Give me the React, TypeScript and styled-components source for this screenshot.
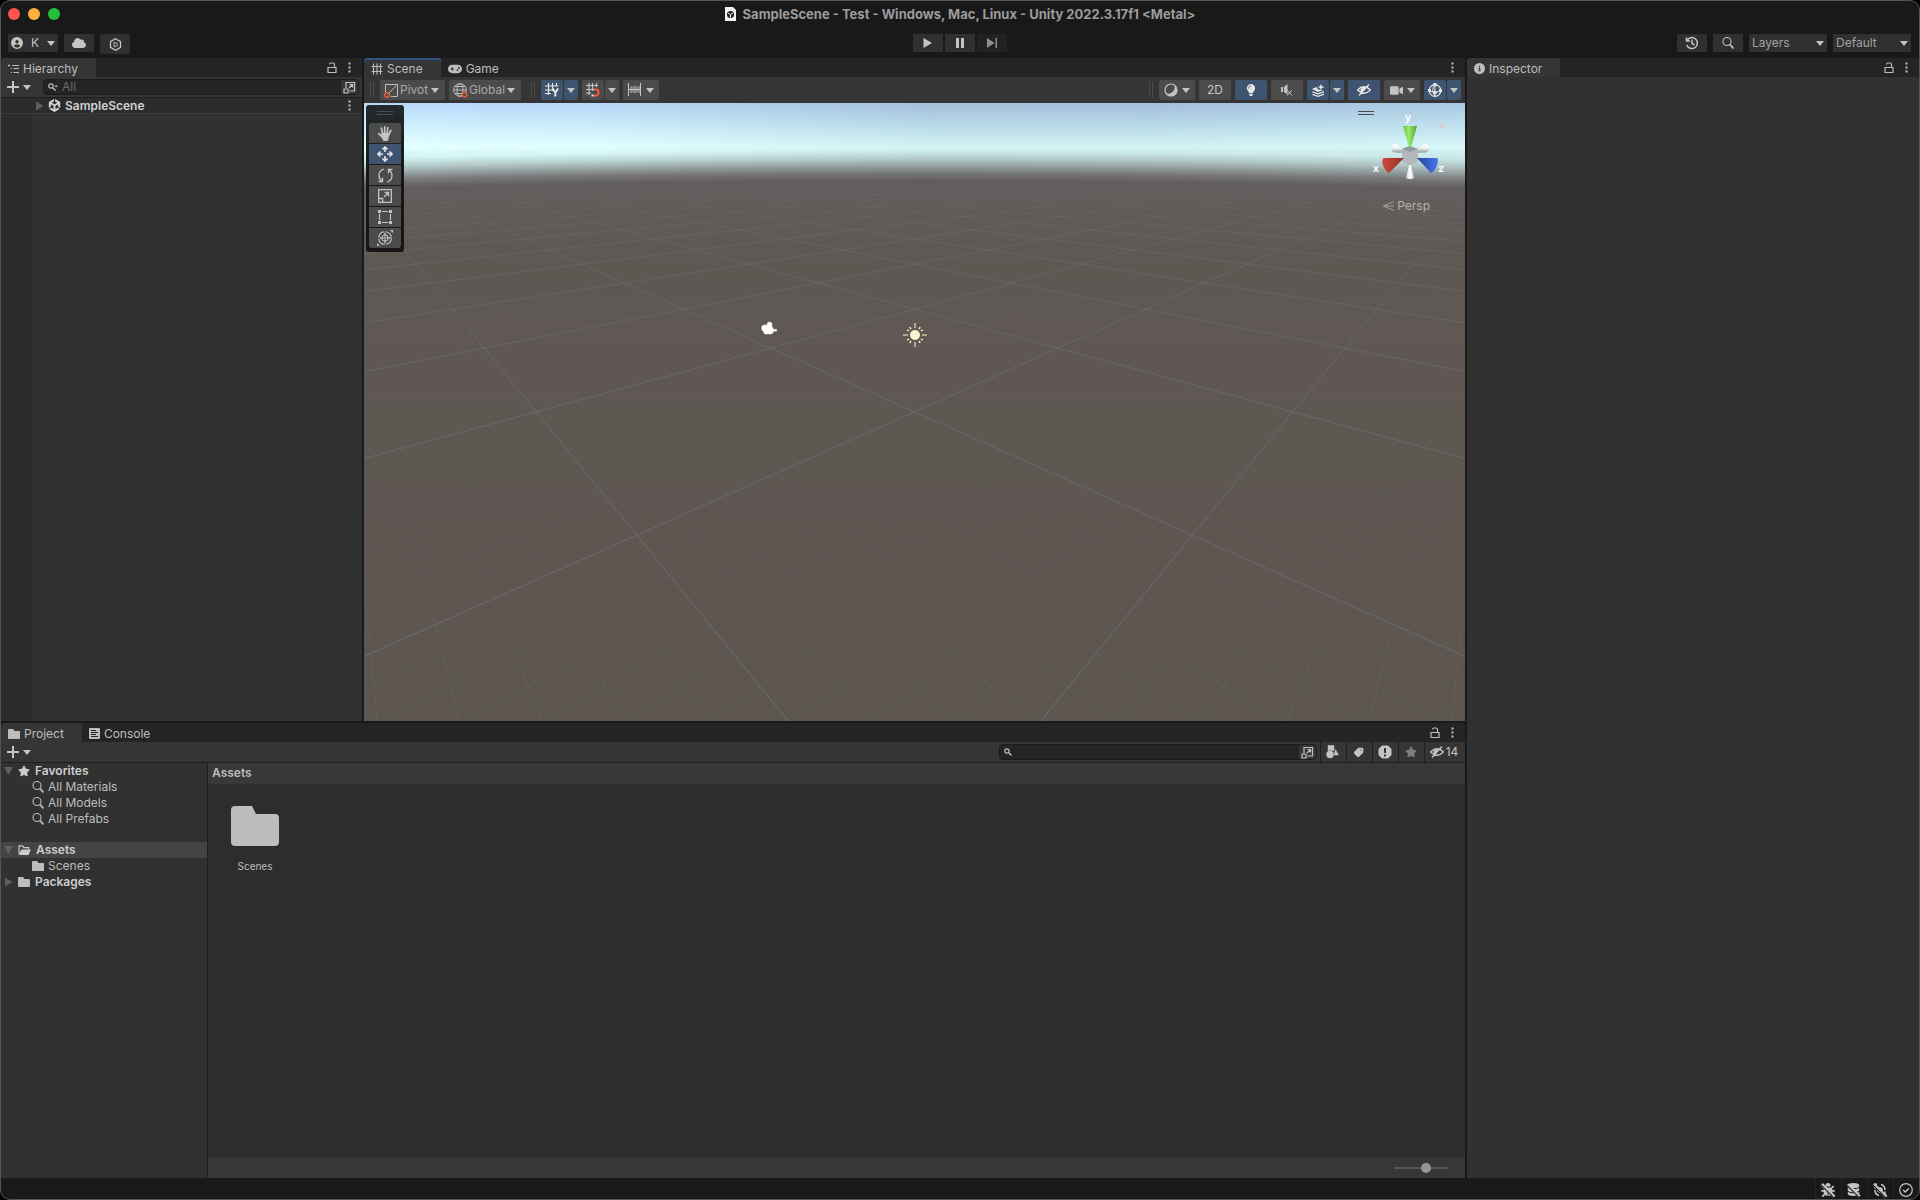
import React from "react";
import styled, { createGlobalStyle, css } from "styled-components";
import {
  FaUnity,
  FaCloud,
  FaCircleUser,
  FaStar,
  FaGamepad,
  FaVideo,
  FaLightbulb,
  FaBug,
  FaCircleInfo,
  FaTag,
  FaDatabase,
} from "react-icons/fa6";

const color = {
  chrome: "#191919",
  tabBar: "#242424",
  bar: "#353535",
  panel: "#313131",
  gutter: "#2c2c2c",
  field: "#242424",
  line: "#1f1f1f",
  button: "#303030",
  tool: "#4b4b4b",
  toolOn: "#3f5470",
  text: "#bdbdbd",
  icon: "#c4c4c4",
  dim: "#a2a2a2",
};

const GlobalStyle = createGlobalStyle`
  * { box-sizing: border-box; }
  body { margin: 0; background: #000; }
  body, button, input, select {
    font-family: Inter, "Liberation Sans", sans-serif;
    font-size: 12px;
    line-height: 16px;
    color: ${color.text};
  }
  button { display: flex; align-items: center; justify-content: center; border: 0; padding: 0; background: none; }
  svg { display: block; flex: none; }
  h1, h2, ul { margin: 0; padding: 0; font-size: 12px; list-style: none; }
`;

/* ---------- window ---------- */

const Window = styled.div`
  height: 100vh;
  display: flex;
  flex-direction: column;
  background: ${color.chrome};
  border: 1px solid #555;
  border-radius: 10px;
  overflow: hidden;
`;

const TitleBar = styled.header`
  display: grid;
  grid-template-columns: 1fr auto 1fr;
  align-items: center;
  height: 27px;
  padding: 0 7px 2px;
`;

const Lights = styled.div`
  display: flex;
  gap: 8px;
`;

const Light = styled.button<{ $fill: string }>`
  width: 12px;
  height: 12px;
  border-radius: 50%;
  background: ${(p) => p.$fill};
`;

const Title = styled.h1`
  display: flex;
  align-items: center;
  gap: 7px;
  font-size: 13px;
  font-weight: 700;
  color: #9b9b9b;
  white-space: nowrap;
`;

const AppBar = styled.div`
  display: grid;
  grid-template-columns: 1fr auto 1fr;
  align-items: start;
  height: 30px;
  padding: 6px 8px 0 7px;
`;

const Group = styled.div<{ $gap: number; $end?: boolean }>`
  display: flex;
  gap: ${(p) => p.$gap}px;
  justify-content: ${(p) => (p.$end ? "flex-end" : "flex-start")};
`;

const ChromeButton = styled.button<{ $wide?: boolean; $tall?: boolean; $faint?: boolean }>`
  width: ${(p) => (p.$wide ? 50 : 30)}px;
  height: ${(p) => (p.$tall ? 20 : 18)}px;
  gap: 8px;
  background: ${(p) => (p.$faint ? "#222" : color.button)};
  color: ${(p) => (p.$faint ? "#909090" : color.icon)};
  border-radius: ${(p) => (p.$tall ? 2 : 0)}px;
`;

const ChromeSelect = styled.label`
  position: relative;
  width: 78px;
  height: 18px;
  display: flex;
  align-items: center;
  background: ${color.button};
  select {
    appearance: none;
    width: 100%;
    border: 0;
    padding: 0 3px;
    background: transparent;
    color: ${color.dim};
  }
  svg { position: absolute; right: 3px; pointer-events: none; }
`;

/* ---------- docking ---------- */

const Dock = styled.main`
  flex: 1;
  min-height: 0;
  display: grid;
  grid-template-columns: minmax(0, 1464fr) minmax(0, 452fr);
  gap: 2px;
`;

const Stack = styled.div`
  display: grid;
  grid-template-rows: minmax(0, 663fr) minmax(0, 455fr);
  gap: 2px;
`;

const Upper = styled.div`
  display: grid;
  grid-template-columns: minmax(0, 361fr) minmax(0, 1101fr);
  gap: 2px;
`;

const Panel = styled.section`
  display: flex;
  flex-direction: column;
  min-width: 0;
  min-height: 0;
  background: ${color.panel};
  border-radius: 3px 3px 0 0;
  overflow: hidden;
`;

const TabBar = styled.div`
  display: flex;
  height: 19px;
  flex: none;
  background: ${color.tabBar};
`;

const Tab = styled.button<{ $active?: boolean; $accent?: boolean }>`
  gap: 4px;
  padding: 2px 18px 0 7px;
  border-radius: 3px 3px 0 0;
  background: ${(p) => (p.$active ? color.bar : "transparent")};
  box-shadow: ${(p) => (p.$accent ? "inset 0 2px 0 #2c5680" : "none")};
  font-size: 12px;
`;

const TabActions = styled.div`
  display: flex;
  align-items: center;
  gap: 11px;
  margin-left: auto;
  padding-right: 11px;
`;

const Bar = styled.div`
  display: flex;
  align-items: center;
  height: 20px;
  flex: none;
  padding: 0 3px 0 6px;
  background: ${color.bar};
`;

const AddButton = styled.button`
  gap: 4px;
  color: ${color.icon};
`;

const Search = styled.label<{ $push?: boolean }>`
  display: flex;
  align-items: center;
  height: 16px;
  gap: 4px;
  padding-left: 4px;
  background: ${color.field};
  border: 1px solid #1c1c1c;
  border-radius: 4px;
  overflow: hidden;
  color: ${color.icon};
  ${(p) =>
    p.$push
      ? css`width: 318px; margin-left: auto;`
      : css`flex: 1; margin-left: 12px;`}
  input {
    flex: 1;
    min-width: 0;
    height: 14px;
    border: 0;
    outline: 0;
    padding: 0;
    background: transparent;
    &::placeholder { color: #6a6a6a; }
  }
  button {
    width: 17px;
    height: 14px;
    background: ${color.bar};
    color: ${color.icon};
  }
`;

/* ---------- hierarchy ---------- */

const SceneRow = styled.div`
  display: flex;
  align-items: center;
  height: 17px;
  flex: none;
  gap: 4px;
  padding: 0 11px 0 33px;
  background: ${color.gutter};
  border-top: 1px solid ${color.line};
  border-bottom: 1px solid #393939;
  font-weight: 600;
  color: #d2d2d2;
  > :last-child { margin-left: auto; }
`;

const HierarchyBody = styled.div`
  flex: 1;
  border-left: 31px solid ${color.gutter};
`;

/* ---------- scene ---------- */

const SceneBar = styled.div`
  display: flex;
  align-items: center;
  gap: 4px;
  height: 26px;
  flex: none;
  padding: 0 4px 0 6px;
  background: ${color.bar};
`;

const Grip = styled.span<{ $first?: boolean }>`
  width: 4px;
  height: 16px;
  margin: 0 2px 0 ${(p) => (p.$first ? 0 : 6)}px;
  border: solid #4c4c4c;
  border-width: 0 1px;
`;

const Spacer = styled.span`
  flex: 1;
`;

const Tool = styled.button<{ $w: number; $on?: boolean }>`
  width: ${(p) => p.$w}px;
  height: 20px;
  gap: 4px;
  border-radius: 2px;
  background: ${(p) => (p.$on ? color.toolOn : color.tool)};
  color: ${(p) => (p.$on ? "#e6e6e6" : color.icon)};
`;

const Split = styled.div`
  display: flex;
  gap: 1px;
`;

const ToolSelect = styled.label<{ $w: number }>`
  position: relative;
  display: flex;
  align-items: center;
  gap: 1px;
  width: ${(p) => p.$w}px;
  height: 20px;
  padding-left: 4px;
  border-radius: 2px;
  background: ${color.tool};
  select {
    appearance: none;
    flex: 1;
    min-width: 0;
    padding: 0;
    border: 0;
    background: transparent;
    color: #a8a8a8;
  }
  svg:last-child { position: absolute; right: 6px; pointer-events: none; }
`;

const View = styled.div`
  position: relative;
  flex: 1;
  min-height: 0;
  background: #5e5752;
`;

const Canvas = styled.svg`
  position: absolute;
  inset: 0;
  width: 100%;
  height: 100%;
`;

const Palette = styled.div`
  position: absolute;
  top: 2px;
  left: 2px;
  display: flex;
  flex-direction: column;
  gap: 1px;
  padding: 6px 3px 4px;
  border-radius: 3px;
  background: linear-gradient(#232b2d, #161616 50%);
  button { border-radius: 0; }
  button:nth-of-type(1) { border-radius: 3px 3px 0 0; }
  button:last-of-type { border-radius: 0 0 3px 3px; }
`;

const Lines = styled.span<{ $dark?: boolean }>`
  width: 16px;
  height: 4px;
  margin: 0 auto 7px;
  border: solid ${(p) => (p.$dark ? "#4b4747" : "#4a4f50")};
  border-width: 1px 0;
`;

const Compass = styled.div`
  position: absolute;
  top: 8px;
  right: 14px;
  display: flex;
  align-items: flex-start;
  svg { overflow: visible; }
`;

const Persp = styled.button`
  position: absolute;
  top: 95px;
  right: 35px;
  gap: 3px;
  color: #b5b1af;
`;

/* ---------- project ---------- */

const Filter = styled.button<{ $w: number; $faint?: boolean }>`
  width: ${(p) => p.$w}px;
  height: 20px;
  gap: 2px;
  padding-right: 2px;
  border-left: 1px solid ${color.line};
  color: ${(p) => (p.$faint ? "#7d7d7d" : color.icon)};
`;

const Filters = styled.div`
  display: flex;
  margin: 0 -3px 0 3px;
`;

const TagIcon = styled(FaTag)`
  transform: scaleX(-1);
`;

const ProjectBody = styled.div`
  flex: 1;
  min-height: 0;
  display: grid;
  grid-template-columns: 207px minmax(0, 1fr);
  border-top: 1px solid ${color.line};
`;

const Tree = styled.ul`
  border-right: 1px solid ${color.line};
`;

const Node = styled.li<{ $child?: boolean; $selected?: boolean; $gap?: boolean }>`
  display: flex;
  align-items: center;
  gap: ${(p) => (p.$child ? 4 : 5)}px;
  height: 16px;
  margin-top: ${(p) => (p.$gap ? 15 : 0)}px;
  padding-left: ${(p) => (p.$child ? 31 : 2)}px;
  background: ${(p) => (p.$selected ? "#444" : "transparent")};
  font-weight: ${(p) => (p.$child ? 400 : 600)};
  color: ${(p) => (p.$child ? color.text : "#cdcdcd")};
`;

const Browser = styled.div`
  display: flex;
  flex-direction: column;
  background: #2d2d2d;
`;

const Crumb = styled.h2`
  height: 21px;
  padding: 2px 4px;
  background: #383838;
  font-weight: 600;
`;

const Assets = styled.div`
  flex: 1;
  padding: 22px 14px;
`;

const Asset = styled.button`
  flex-direction: column;
  gap: 12px;
  width: 66px;
  font-size: 10px;
`;

const Footer = styled.div`
  display: flex;
  align-items: center;
  justify-content: flex-end;
  height: 21px;
  padding-right: 16px;
  background: #373737;
`;

const Zoom = styled.input`
  appearance: none;
  width: 55px;
  height: 10px;
  margin: 0;
  background: linear-gradient(#555, #555) center / 100% 2px no-repeat;
  &::-webkit-slider-thumb {
    appearance: none;
    width: 10px;
    height: 10px;
    border-radius: 50%;
    background: #969696;
  }
`;

const Status = styled.footer`
  display: flex;
  justify-content: flex-end;
  height: 21px;
  flex: none;
`;

const StatusButton = styled.button`
  width: 26px;
  padding: 2px 2px 0 0;
  border-left: 1px solid #232323;
  color: ${color.icon};
`;

/* ---------- icons ---------- */

type GlyphProps = { w?: number; h?: number; box?: string; children: React.ReactNode };
const Glyph = ({ w = 14, h = w, box = `0 0 ${w} ${h}`, children }: GlyphProps) => (
  <svg width={w} height={h} viewBox={box} fill="none" stroke="currentColor" aria-hidden="true">
    {children}
  </svg>
);

const Caret = ({ w = 8 }: { w?: number }) => (
  <Glyph w={w} h={5} box="0 0 8 5"><path d="M0 0h8L4 5z" fill="#c4c4c4" stroke="none" /></Glyph>
);
const Fold = ({ open }: { open?: boolean }) => (
  <Glyph w={10}>
    <path d={open ? "M1 1h9L5.500 9z" : "M2 0.500v9L9.500 5z"} fill="#5f5f5f" stroke="none" />
  </Glyph>
);
const Dots = () => (
  <Glyph w={3} h={11}><path d="M0.500 0.500h2v2h-2zM0.500 4.500h2v2h-2zM0.500 8.500h2v2h-2z" fill="#c4c4c4" stroke="none" /></Glyph>
);
const Unlock = () => (
  <Glyph w={10} h={11}><path d="M1 5.500h8v5H1zM2.500 2.500q0-1.500 1.500-1.500h2q1.500 0 1.500 1.500v3" strokeWidth="1.200" /></Glyph>
);
const Plus = () => (
  <Glyph w={12}><path d="M6 0v12M0 6h12" strokeWidth="2" /></Glyph>
);
const Lens = ({ s = 12 }: { s?: number }) => (
  <Glyph w={s} box="0 0 12 12"><circle cx="5" cy="4.500" r="4" strokeWidth="1.100" /><path d="m8 7.500 3.500 4" strokeWidth="1.800" /></Glyph>
);
const SmallLens = ({ caret }: { caret?: boolean }) => (
  <Glyph w={10} h={8}>
    <circle cx="3" cy="3" r="2.200" strokeWidth="1.200" /><path d="m4.700 4.700 2.800 2.800" strokeWidth="1.400" />
    {caret && <path d="M6.500 2.500H10L8.200 4.500z" fill="currentColor" stroke="none" />}
  </Glyph>
);
const Popout = () => (
  <Glyph w={13}><path d="M3 7V1.500h8.500V10H6.500M1 8h4v4H1zM6 7l3.500-3.500M6.500 3.500h3v3" strokeWidth="1.200" /></Glyph>
);
const Folder = ({ w = 12, h = 10 }: { w?: number; h?: number }) => (
  <Glyph w={w} h={h} box="0 0 48 40">
    <path d="M4 0h17l4 8h19q4 0 4 4v24q0 4-4 4H4q-4 0-4-4V4q0-4 4-4z" fill="#bdbdbd" stroke="none" />
  </Glyph>
);
const OpenFolder = () => (
  <Glyph w={13} h={10} box="0 0 14 11">
    <path d="M1 10V1h4l1.200 1.800h5.300V5" strokeWidth="1.300" />
    <path d="M3.500 5h10.500L11.500 11H1z" fill="currentColor" stroke="none" />
  </Glyph>
);
const ListIcon = () => (
  <Glyph w={11} h={10}><path d="M0 1.500h2M1 0.500v2M4 1.500h7M3 4.500h1M5.500 4.500H11M3 8.500h1M5.500 8.500H11" strokeWidth="1.200" /></Glyph>
);
const Hash = () => (
  <Glyph w={12}><path d="M2.500 0.500v11M6 0.500v11M9.500 0.500v11M0.500 3.500h11M0.500 8.500h11" strokeWidth="1.100" /></Glyph>
);
const ConsoleIcon = () => (
  <Glyph w={11}>
    <rect x="0" y="0" width="11" height="11" rx="1" fill="currentColor" stroke="none" />
    <path d="M2 2.500h5M2 4.500h7M2 6.500h5M2 8.500h7" stroke="#242424" />
  </Glyph>
);
const HexIcon = () => (
  <Glyph w={13}><path d="m6.500 0.700 5 2.900v5.800l-5 2.900-5-2.900V3.600z" strokeWidth="1.300" /><path d="M5 4.500h1.500q1.800 0 1.800 2t-1.800 2H5z" /></Glyph>
);
const History = () => (
  <Glyph w={14}><path d="M2 4.500A5.500 5.500 0 1 1 1.700 9M1.500 1.500v3.500H5M7 3.500V7.500l2.500 1.500" strokeWidth="1.500" /></Glyph>
);
const Doc = () => (
  <Glyph w={11} h={14}>
    <path d="M0 0h8l3 3v11H0z" fill="#f2f2f2" stroke="none" />
    <circle cx="5.500" cy="7.500" r="3.600" fill="#222" stroke="none" />
    <path d="M5.500 7.500v3M5.500 7.500 3 6M5.500 7.500 8 6" stroke="#f2f2f2" />
  </Glyph>
);
const Play = () => <Glyph w={9} h={10}><path d="M0.500 0v10L9 5z" fill="currentColor" stroke="none" /></Glyph>;
const Pause = () => <Glyph w={8} h={10}><path d="M0 0h3v10H0zM5 0h3v10H5z" fill="currentColor" stroke="none" /></Glyph>;
const Step = () => <Glyph w={10}><path d="M0 0v10l7.500-5zM8.500 0H10v10H8.500z" fill="currentColor" stroke="none" /></Glyph>;

const PivotIcon = () => (
  <Glyph w={15}><path d="M1.500 9V1.500h12v12H7M4 11l8.500-8.500" /><circle cx="3" cy="12" r="2.300" stroke="#e8603c" strokeWidth="1.400" /></Glyph>
);
const Globe = () => (
  <Glyph w={15}>
    <circle cx="7" cy="7" r="6.300" /><ellipse cx="7" cy="7" rx="3" ry="6.300" /><path d="M0.700 7h12.600M1.800 3.500h10.400M1.800 10.500h10.400" />
    <circle cx="11.500" cy="11.500" r="2.300" stroke="#e8603c" strokeWidth="1.400" fill="#4b4b4b" />
  </Glyph>
);
const GridY = () => (
  <Glyph w={14}><path d="M3.500 0v12M7.500 0v8M11.500 0v3M0 3h13M0 7h7M0 10.500h6" strokeWidth="1.200" /><path d="m7.500 5.500 2.800 4 2.800-4M10.300 9v4.500" strokeWidth="2" /></Glyph>
);
const SnapIcon = () => (
  <Glyph w={14}>
    <path d="M3 0v12M6.500 0v5M10.500 0v4M0 2.500h12M0 6.500h5M0 10h5" strokeWidth="1.200" />
    <path d="M7.500 6.500H10q2.500 0 2.500 3t-2.500 3H7.500" stroke="#ef5b3a" strokeWidth="2.200" />
    <path d="M5.500 5.500h2v2h-2zM5.500 11.500h2v2h-2z" fill="#eee" stroke="none" />
  </Glyph>
);
const Ruler = () => (
  <Glyph w={14}><path d="M0.500 0v13M12.500 0v13M3 3v7M5 3.500v6M7 2.500v8M9 3.500v6M11 3v7M0 6.500h13" /></Glyph>
);
const Shade = () => (
  <Glyph w={14}>
    <path d="M10.500 2.200A6 6 0 1 1 2.200 10.500 6.800 6.800 0 0 0 10.500 2.200z" fill="currentColor" stroke="none" />
    <circle cx="7" cy="7" r="6" strokeWidth="1.200" />
  </Glyph>
);
const Mute = () => (
  <Glyph w={12}><path d="M0 3h2v5H0zM3 3l3.500-3v10.500L3 8z" fill="currentColor" stroke="none" /><path d="m6 6 5 5.500M11 6l-5 5.500" /></Glyph>
);
const Layers = () => (
  <Glyph w={13}>
    <path d="M0 5 4.500 3 6 5.500l5 0.500-5 2z" fill="currentColor" stroke="none" />
    <path d="M0.500 7.800 6 9.800l6-2.200M0.500 10.400 6 12.300l6-2.100" strokeWidth="1.300" />
    <path d="M9 0l1 2.200 2.500.8L10 4 9 6 8 4 5.500 3 8 2.200z" fill="currentColor" stroke="none" />
  </Glyph>
);
const EyeOff = () => (
  <Glyph w={14} h={12}><path d="M0.500 6Q7-0.500 13.500 6 7 12.500 0.500 6zM2 11.500 12 0.500" strokeWidth="1.300" /><path d="M4.500 8.500A3 3 0 0 1 9 4z" fill="currentColor" stroke="none" /></Glyph>
);
const GizmoIcon = () => (
  <Glyph w={14}>
    <circle cx="7" cy="7.500" r="5.800" strokeWidth="1.200" /><path d="M7 1v12.500M1 8q6 3 12 0M7 1.500Q2.500 7 7 13" />
    <path d="M5.500 0h3v3h-3zM0 6h3v3H0zM11 6h3v3h-3zM5.500 8h3v3h-3z" fill="currentColor" stroke="none" />
  </Glyph>
);
const Hand = () => (
  <Glyph w={16}>
    <path d="M4.500 8.500h7.500l-1.500 7H6.500z" fill="currentColor" />
    <path d="M7.700 9V1.800M5.700 9 4.300 3M10 9l.8-6.300M11.300 10.500l2.500-5M6 13 1.800 8.600" strokeWidth="1.700" strokeLinecap="round" />
  </Glyph>
);
const Move = () => (
  <Glyph w={16}>
    <path d="M8 2v4M8 10v4M2 8h4M10 8h4" strokeWidth="1.600" />
    <path d="m5.500 3.500 2.500-2.500 2.500 2.500M5.500 12.500 8 15l2.500-2.500M3.500 5.500 1 8l2.500 2.500M12.500 5.500 15 8l-2.500 2.500" strokeWidth="1.600" />
  </Glyph>
);
const Rotate = () => (
  <Glyph w={15}><path d="M6 1Q1 2.500 1 7.500q0 3.500 3 5.500M0.500 13.500H4.500V9.500M9 14q5-1.500 5-6.500 0-3.500-3-5.500M14.500 1.500H10.500v4" strokeWidth="1.300" /></Glyph>
);
const Scale = () => (
  <Glyph w={14}><path d="M0.700 0.700h12.600v12.600H0.700zM0.700 9.500h4v4M6 8l4-4M6.500 3.500h4v4" strokeWidth="1.300" /></Glyph>
);
const RectIcon = () => (
  <Glyph w={14}><path d="M4 1.500h6M4 12.500h6M1.500 4v6M12.500 4v6" strokeWidth="1.200" /><path d="M0 0h3v3H0zM11 0h3v3h-3zM0 11h3v3H0zM11 11h3v3h-3z" fill="currentColor" stroke="none" /></Glyph>
);
const Transform = () => (
  <Glyph w={16}>
    <circle cx="8" cy="8" r="6.300" strokeWidth="1.100" strokeDasharray="8.500 1.400" />
    <path d="M8 3v10M3 8h10M5.500 5.500h5v5h-5z" strokeWidth=".8" />
    <path d="M6.500 4.500 8 2.500l1.500 2zM6.500 11.500 8 13.500l1.500-2zM4.500 6.500 2.500 8l2 1.500zM11.500 6.500 13.500 8l-2 1.500zM0 13v3h3zM13 0h3v3z" fill="currentColor" stroke="none" />
  </Glyph>
);
const Shapes = () => (
  <Glyph w={13} h={14}><path d="M2 0.500h6v5H2zM9.500 4.500 12.500 10H8z" fill="currentColor" stroke="currentColor" strokeWidth=".5" /><circle cx="4" cy="9.500" r="3.700" fill="currentColor" stroke="none" /></Glyph>
);
const Alert = () => (
  <Glyph w={14}><path d="M4 0.500h6L13.500 4v6L10 13.500H4L0.500 10V4z" fill="currentColor" stroke="none" /><path d="M7 3v5M7 9.500v2" stroke="#353535" strokeWidth="2" /></Glyph>
);
const Slash = styled.span`
  position: relative;
  display: flex;
  &::after {
    content: "";
    position: absolute;
    inset: 6px -2px auto;
    height: 2px;
    background: currentColor;
    border-bottom: 1px solid ${color.chrome};
    transform: rotate(45deg);
  }
`;
const Refresh = () => (
  <Glyph w={14}><path d="M4 1.200H2v4.500M2 7q0 4.500 4 5.500M10 12.800h2V8.500M12 7q0-4.500-4-5.500" strokeWidth="1.600" /><circle cx="7" cy="7" r="2.800" fill="currentColor" stroke="none" /></Glyph>
);
const Check = () => (
  <Glyph w={14}><circle cx="7" cy="7" r="6.300" strokeWidth="1.200" /><path d="m4.200 7 2 2 3.600-3.600" strokeWidth="1.400" /></Glyph>
);

/* ---------- 3D viewport ---------- */

/* Ground plane in one-point perspective: a cell corner at depth d and lateral
   offset s lands at (CX + SPREAD * s / d, HORIZON + RISE / d). */
const CX = 550.5;
const HORIZON = 45.4;
const RISE = 825.7;
const SPREAD = 1185.9;
const ORIGIN = 3.135;

const gridPath = (step: number, from: number, to: number, far: number) => {
  let d = "";
  for (let n = from; n <= to; n++) {
    const c = n * step;
    for (const side of [1, -1]) {
      const at = (depth: number) => {
        const s = (side * (2 * c + ORIGIN - depth)) / 2;
        return `${(CX + (SPREAD * s) / depth).toFixed(1)} ${(HORIZON + RISE / depth).toFixed(1)}`;
      };
      d += `M${at(1.2)}L${at(far)}`;
    }
  }
  return d;
};

const majorGrid = gridPath(1, -14, 34, 26);
const minorGrid = gridPath(0.1, -26, 36, 3.2);

const skyStops: [number, string, string][] = [
  [0, "#a3bfdb", "#b8d9fb"],
  [0.25, "#b8d9e6", "#cfefff"],
  [0.5, "#d2f3f5", "#e4ffff"],
  [0.62, "#c6e2e2", "#d2f2f2"],
  [1, "#a9bcbc", "#a9bcbc"],
];

/* The far edge of the ground curves down towards the sides of the view. */
const R = 19000;
const haze: [number, number][] = [[48, 0], [56, 0.18], [63, 0.45], [70, 0.76], [78, 1]];

const Viewport = () => (
  <Canvas viewBox="0 0 1101 618" preserveAspectRatio="xMidYMid slice" aria-label="Scene view">
    <defs>
      <linearGradient id="sky" x2="0" y2="1">
        {skyStops.map(([o, c]) => <stop key={o} offset={o} stopColor={c} />)}
      </linearGradient>
      <linearGradient id="skyBright" x2="0" y2="1">
        {skyStops.map(([o, , c]) => <stop key={o} offset={o} stopColor={c} />)}
      </linearGradient>
      <radialGradient id="haze" gradientUnits="userSpaceOnUse" cx={CX} cy={R} r={R}>
        {[...haze].reverse().map(([y, a]) => (
          <stop key={y} offset={1 - y / R} stopColor="#625d5c" stopOpacity={a} />
        ))}
      </radialGradient>
      <linearGradient id="sun" x1="0" x2="1">
        <stop offset="0" stopColor="#fff" />
        <stop offset=".2" stopColor="#ddd" />
        <stop offset=".52" stopColor="#000" />
        <stop offset=".7" stopColor="#000" />
        <stop offset="1" stopColor="#555" />
      </linearGradient>
      <mask id="glow"><rect width="1101" height="90" fill="url(#sun)" /></mask>
      <linearGradient id="ground" gradientUnits="userSpaceOnUse" x1="0" x2="0" y1="88" y2="618">
        <stop offset="0" stopColor="#625d5c" />
        <stop offset=".14" stopColor="#5e5853" />
        <stop offset=".35" stopColor="#5f5753" />
        <stop offset=".48" stopColor="#5d5852" />
        <stop offset=".62" stopColor="#5f5652" />
        <stop offset="1" stopColor="#5d5650" />
      </linearGradient>
      <linearGradient id="major" gradientUnits="userSpaceOnUse" x1="0" x2="0" y1="72" y2="618">
        <stop offset="0" stopColor="#a0a3a2" stopOpacity="0" />
        <stop offset=".12" stopColor="#a0a3a2" stopOpacity=".12" />
        <stop offset=".4" stopColor="#a0a3a2" stopOpacity=".22" />
        <stop offset="1" stopColor="#a0a3a2" stopOpacity=".2" />
      </linearGradient>
      <linearGradient id="minor" gradientUnits="userSpaceOnUse" x1="0" x2="0" y1="320" y2="618">
        <stop offset="0" stopColor="#8b918d" stopOpacity="0" />
        <stop offset="1" stopColor="#8b918d" stopOpacity=".13" />
      </linearGradient>
    </defs>
    <rect width="1101" height="618" fill="url(#ground)" />
    <rect width="1101" height="88" fill="url(#sky)" />
    <rect width="1101" height="88" fill="url(#skyBright)" mask="url(#glow)" />
    <rect y="45" width="1101" height="43" fill="url(#haze)" />
    <path d={minorGrid} fill="none" stroke="url(#minor)" />
    <path d={majorGrid} fill="none" stroke="url(#major)" />
    <path
      d="M397 225q0-3 3-3.500 2-.5 2.500.5 0-3.500 3-3.500 3.500 0 3 5l1.500 2.500 3-.5v3.500l-3-.5q-1 3-3.500 3h-5q-2 0-2.500-3-2-.5-2-3.500z"
      fill="#fff"
      stroke="#4a4541"
      strokeWidth=".5"
    />
    <g transform="translate(551 232)" stroke="#b7a98c" strokeWidth="2">
      <path d="M0-12v5M0 12V7M-12 0h5M12 0H7" />
      <path d="m4-6 1.200-1.800M6-4l1.800-1.200M-4-6l-1.200-1.800M-6-4l-1.800-1.200M4 6l1.200 1.800M6 4l1.800 1.200M-4 6l-1.200 1.800M-6 4l-1.800 1.200" stroke="#fbe9c6" strokeWidth="1.500" />
      <circle r="5" fill="#fff1d4" stroke="none" />
    </g>
  </Canvas>
);

const AxisGizmo = () => (
  <svg width="77" height="78" viewBox="1374 111 77 78" aria-label="Orientation gizmo">
    <defs>
      <linearGradient id="gx" x1="0" x2="1"><stop offset="0" stopColor="#cf4a3a" /><stop offset="1" stopColor="#8f2f28" /></linearGradient>
      <linearGradient id="gy" x1="0" x2="1"><stop offset="0" stopColor="#6fbf46" /><stop offset=".4" stopColor="#93ee66" /><stop offset="1" stopColor="#5b9e3b" /></linearGradient>
      <linearGradient id="gz" x1="0" x2="1"><stop offset="0" stopColor="#2a45a0" /><stop offset="1" stopColor="#4674f0" /></linearGradient>
      <linearGradient id="gw" x1="0" x2="1"><stop offset="0" stopColor="#c9cdcf" /><stop offset=".5" stopColor="#fff" /><stop offset="1" stopColor="#c9cdcf" /></linearGradient>
      <linearGradient id="gs" x2="0" y2="1"><stop offset="0" stopColor="#fff" /><stop offset=".5" stopColor="#f1f3f4" /><stop offset="1" stopColor="#8f989c" /></linearGradient>
    </defs>
    <path d="M1402 149.500v3.200l-7.500-.2q-3.500-1-3.500-4 .5-4 4.500-5zM1418 149.500v3.200l7.500-.2q3.500-1 3.500-4-.5-4-4.500-5z" fill="url(#gs)" />
    <path d="m1402 149 8-3 8 3v12l-8 5-8-5z" fill="#b3b8bb" />
    <path d="m1402 149 8-3 8 3-8 3z" fill="#939a9f" />
    <path d="M1403 126h14l-6 21h-2z" fill="url(#gy)" />
    <path d="M1404 158h-20q-3 1-1 7 2 6 6 8z" fill="url(#gx)" />
    <path d="M1417 158h20q2 1 0 7-2 6-6 8z" fill="url(#gz)" />
    <path d="M1409 165h2l3 13q-4 2-8 0z" fill="url(#gw)" />
    <path d="M1439 123h6v5h-6z" fill="#cdd3d6" />
    <path d="M1440 121q0-1.500 2-1.500t2 1.500v2" fill="none" stroke="#bdd6e2" />
    <g fill="#fff" fontSize="11" fontWeight="600" fontFamily='Inter, "Liberation Sans", sans-serif' textAnchor="middle">
      <text x="1408" y="121">y</text>
      <text x="1376" y="172">x</text>
      <text x="1441" y="172">z</text>
    </g>
  </svg>
);

const palette = [
  { name: "View", icon: <Hand /> },
  { name: "Move", icon: <Move />, on: true },
  { name: "Rotate", icon: <Rotate /> },
  { name: "Scale", icon: <Scale /> },
  { name: "Rect", icon: <RectIcon /> },
  { name: "Transform", icon: <Transform /> },
];

const PanelMenu = ({ lock = true }: { lock?: boolean }) => (
  <TabActions>
    {lock && <button aria-label="Lock"><Unlock /></button>}
    <button aria-label="Panel menu"><Dots /></button>
  </TabActions>
);

const HierarchyPanel = () => (
  <Panel>
    <TabBar>
      <Tab $active><ListIcon />Hierarchy</Tab>
      <PanelMenu />
    </TabBar>
    <Bar>
      <AddButton aria-label="Create object"><Plus /><Caret /></AddButton>
      <Search>
        <SmallLens caret />
        <input placeholder="All" aria-label="Search hierarchy" />
        <button aria-label="Open search"><Popout /></button>
      </Search>
    </Bar>
    <SceneRow>
      <Fold />
      <FaUnity size={13} />
      SampleScene
      <button aria-label="Scene menu"><Dots /></button>
    </SceneRow>
    <HierarchyBody />
  </Panel>
);

const ScenePanel = () => (
  <Panel>
    <TabBar>
      <Tab $active $accent><Hash />Scene</Tab>
      <Tab><FaGamepad size={14} />Game</Tab>
      <PanelMenu lock={false} />
    </TabBar>
    <SceneBar>
      <Grip $first />
      <ToolSelect $w={65}>
        <PivotIcon />
        <select aria-label="Handle position"><option>Pivot</option></select>
        <Caret />
      </ToolSelect>
      <ToolSelect $w={72}>
        <Globe />
        <select aria-label="Handle rotation"><option>Global</option></select>
        <Caret />
      </ToolSelect>
      <Grip />
      <Split>
        <Tool $w={22} $on aria-label="Grid"><GridY /></Tool>
        <Tool $w={14} $on aria-label="Grid options"><Caret /></Tool>
      </Split>
      <Split>
        <Tool $w={22} aria-label="Snap"><SnapIcon /></Tool>
        <Tool $w={14} aria-label="Snap options"><Caret /></Tool>
      </Split>
      <Tool $w={36} aria-label="Snap increment"><Ruler /><Caret /></Tool>
      <Spacer />
      <Grip />
      <Tool $w={36} aria-label="Draw mode"><Shade /><Caret /></Tool>
      <Tool $w={32}>2D</Tool>
      <Tool $w={32} $on aria-label="Lighting"><FaLightbulb size={12} /></Tool>
      <Tool $w={32} aria-label="Audio"><Mute /></Tool>
      <Split>
        <Tool $w={22} $on aria-label="Effects"><Layers /></Tool>
        <Tool $w={14} $on aria-label="Effects options"><Caret /></Tool>
      </Split>
      <Tool $w={32} $on aria-label="Visibility"><EyeOff /></Tool>
      <Tool $w={36} aria-label="Camera"><FaVideo size={13} /><Caret /></Tool>
      <Split>
        <Tool $w={22} $on aria-label="Gizmos"><GizmoIcon /></Tool>
        <Tool $w={14} $on aria-label="Gizmo options"><Caret /></Tool>
      </Split>
    </SceneBar>
    <View>
      <Viewport />
      <Palette>
        <Lines />
        {palette.map((t) => (
          <Tool key={t.name} $w={32} $on={t.on} aria-label={t.name}>{t.icon}</Tool>
        ))}
      </Palette>
      <Compass>
        <Lines $dark />
        <AxisGizmo />
      </Compass>
      <Persp>
        <Glyph w={11} h={10}><path d="M11 0.500 0.500 5l10.500 4.500M0.500 5H11" strokeWidth=".8" /></Glyph>
        Persp
      </Persp>
    </View>
  </Panel>
);

const ProjectPanel = () => (
  <Panel>
    <TabBar>
      <Tab $active><Folder />Project</Tab>
      <Tab><ConsoleIcon />Console</Tab>
      <PanelMenu />
    </TabBar>
    <Bar>
      <AddButton aria-label="Create asset"><Plus /><Caret /></AddButton>
      <Search $push>
        <SmallLens />
        <input aria-label="Search project" />
        <button aria-label="Open search"><Popout /></button>
      </Search>
      <Filters>
        <Filter $w={26} aria-label="Filter by type"><Shapes /></Filter>
        <Filter $w={26} aria-label="Filter by label"><TagIcon size={11} /></Filter>
        <Filter $w={26} aria-label="Filter by log"><Alert /></Filter>
        <Filter $w={26} $faint aria-label="Save search"><FaStar size={12} /></Filter>
        <Filter $w={41}><EyeOff />14</Filter>
      </Filters>
    </Bar>
    <ProjectBody>
      <Tree>
        <Node><Fold open /><FaStar size={12} />Favorites</Node>
        <Node $child><Lens />All Materials</Node>
        <Node $child><Lens />All Models</Node>
        <Node $child><Lens />All Prefabs</Node>
        <Node $gap $selected><Fold open /><OpenFolder />Assets</Node>
        <Node $child><Folder />Scenes</Node>
        <Node><Fold /><Folder />Packages</Node>
      </Tree>
      <Browser>
        <Crumb>Assets</Crumb>
        <Assets>
          <Asset><Folder w={48} h={40} />Scenes</Asset>
        </Assets>
        <Footer>
          <Zoom type="range" min={0} max={100} defaultValue={60} aria-label="Thumbnail size" />
        </Footer>
      </Browser>
    </ProjectBody>
  </Panel>
);

export default function App() {
  return (
    <>
      <GlobalStyle />
      <Window>
        <TitleBar>
          <Lights>
            <Light $fill="#ff5450" aria-label="Close" />
            <Light $fill="#ffb13d" aria-label="Minimize" />
            <Light $fill="#26c03f" aria-label="Zoom" />
          </Lights>
          <Title><Doc />SampleScene - Test - Windows, Mac, Linux - Unity 2022.3.17f1 &lt;Metal&gt;</Title>
        </TitleBar>
        <AppBar>
          <Group $gap={6}>
            <ChromeButton $wide><FaCircleUser size={12} /><span>K</span><Caret /></ChromeButton>
            <ChromeButton aria-label="Cloud"><FaCloud size={14} /></ChromeButton>
            <ChromeButton $tall aria-label="Version control"><HexIcon /></ChromeButton>
          </Group>
          <Group $gap={2}>
            <ChromeButton aria-label="Play"><Play /></ChromeButton>
            <ChromeButton aria-label="Pause"><Pause /></ChromeButton>
            <ChromeButton $faint aria-label="Step"><Step /></ChromeButton>
          </Group>
          <Group $gap={6} $end>
            <ChromeButton aria-label="History"><History /></ChromeButton>
            <ChromeButton aria-label="Search"><Lens /></ChromeButton>
            <ChromeSelect><select aria-label="Layers"><option>Layers</option></select><Caret /></ChromeSelect>
            <ChromeSelect><select aria-label="Layout"><option>Default</option></select><Caret /></ChromeSelect>
          </Group>
        </AppBar>
        <Dock>
          <Stack>
            <Upper>
              <HierarchyPanel />
              <ScenePanel />
            </Upper>
            <ProjectPanel />
          </Stack>
          <Panel>
            <TabBar>
              <Tab $active><FaCircleInfo size={11} />Inspector</Tab>
              <PanelMenu />
            </TabBar>
          </Panel>
        </Dock>
        <Status>
          <StatusButton aria-label="Debugger"><Slash><FaBug size={14} /></Slash></StatusButton>
          <StatusButton aria-label="Cache server"><Slash><FaDatabase size={13} /></Slash></StatusButton>
          <StatusButton aria-label="Auto refresh"><Slash><Refresh /></Slash></StatusButton>
          <StatusButton aria-label="Background tasks"><Check /></StatusButton>
        </Status>
      </Window>
    </>
  );
}
